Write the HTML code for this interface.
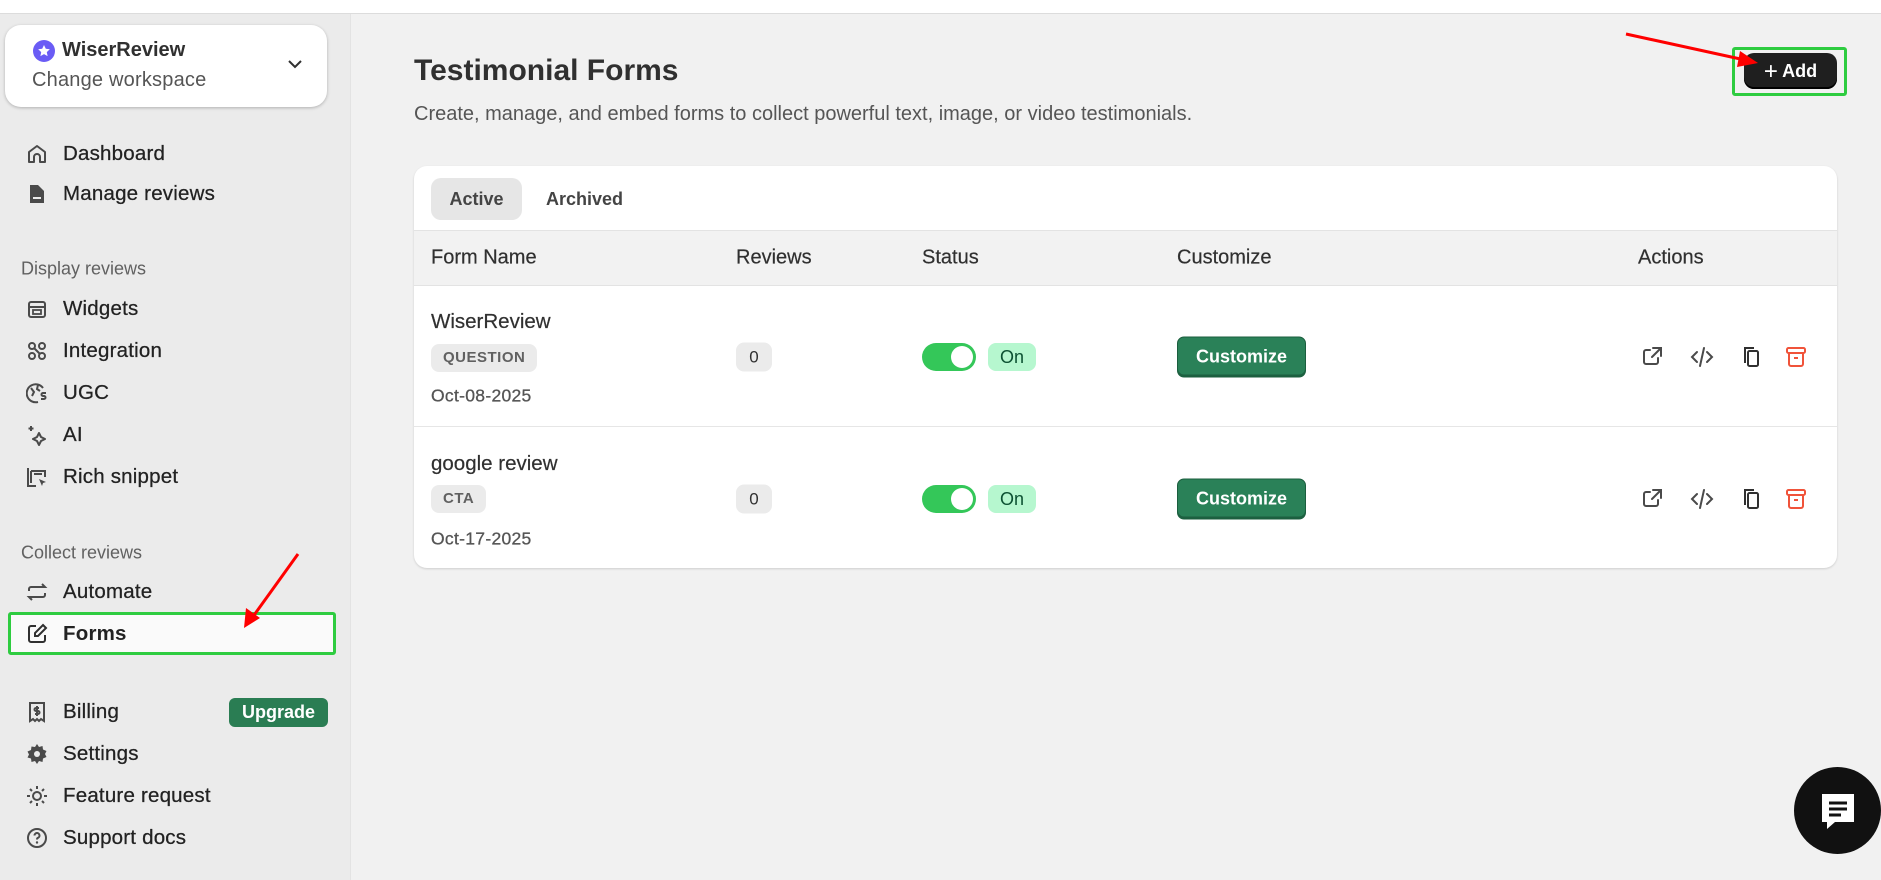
<!DOCTYPE html>
<html><head><meta charset="utf-8">
<style>
*{box-sizing:border-box;margin:0;padding:0}
body{width:1881px;height:880px;overflow:hidden;background:#f1f1f1;font-family:"Liberation Sans",sans-serif;color:#303030;position:relative}
.top{position:absolute;left:0;top:0;width:1881px;height:14px;background:#fff;border-bottom:1px solid #dcdcdc}
.side{position:absolute;left:0;top:14px;width:351px;height:866px;background:#ebebeb;border-right:1px solid #e3e3e3}
.ws{position:absolute;left:5px;top:25px;width:322px;height:82px;background:#fff;border-radius:16px;box-shadow:0 1px 3px rgba(0,0,0,.25)}
.ws .n{position:absolute;left:57px;top:14px;font-size:20px;font-weight:bold;color:#303030}
.ws .c{position:absolute;left:27px;top:44px;font-size:20px;color:#555;letter-spacing:.2px}
.ws .logo{position:absolute;left:28px;top:15px;width:22px;height:22px;border-radius:50%;background:#6a5cf5}
.nav{position:absolute;left:63px;font-size:20.5px;color:#222;transform:translateY(-50%);letter-spacing:.2px;-webkit-text-stroke:.25px #222}
.lbl{position:absolute;left:21px;font-size:18px;color:#616161;transform:translateY(-50%)}
.ic{position:absolute;left:26px;width:22px;height:22px;transform:translateY(-50%)}
.main-t{position:absolute;left:414px;top:54px;font-size:30px;font-weight:bold;color:#303030}
.sub{position:absolute;left:414px;top:103px;font-size:20px;color:#555}
.add{position:absolute;left:1744px;top:53px;width:93px;height:36px;background:#1f1f1f;border-radius:10px;color:#fff;font-weight:bold;font-size:18px;line-height:36px;text-align:center;box-shadow:inset 0 -2px 0 #000}
.gbox{position:absolute;border:3px solid #2ecc40;border-radius:3px}
.card{position:absolute;left:414px;top:166px;width:1423px;height:402px;background:#fff;border-radius:13px;box-shadow:0 1px 2px rgba(0,0,0,.15);overflow:hidden}
.tab{position:absolute;top:12px;height:42px;line-height:42px;font-size:18px;font-weight:bold;color:#444;padding:0 18px;border-radius:10px}
.hdr{position:absolute;left:0;top:64px;width:100%;height:56px;background:#f2f2f2;border-top:1px solid #e3e3e3;border-bottom:1px solid #e3e3e3}
.h{position:absolute;top:50%;transform:translateY(-50%);font-size:20px;color:#303030;-webkit-text-stroke:.2px #303030}
.row{position:absolute;left:0;width:100%;height:141px;border-bottom:1px solid #e6e6e6}
.t{position:absolute;transform:translateY(-50%)}
.name{left:17px;font-size:20.5px;color:#303030;-webkit-text-stroke:.2px #303030}
.badge{left:17px;height:28px;line-height:28px;padding:0 12px;background:#ebebeb;border-radius:8px;font-size:15px;font-weight:bold;color:#616161;letter-spacing:.5px}
.date{left:17px;font-size:17.5px;color:#555;letter-spacing:.3px;-webkit-text-stroke:.3px #555}
.cnt{left:322px;width:36px;height:29px;line-height:29px;text-align:center;background:#ebebeb;border-radius:8px;font-size:17px}
.tog{left:508px;width:54px;height:28px;background:#34c759;border-radius:14px}
.tog::after{content:"";position:absolute;right:3px;top:3px;width:22px;height:22px;border-radius:50%;background:#fff}
.on{left:574px;width:48px;height:28px;line-height:28px;text-align:center;background:#b6f7cf;border-radius:8px;font-size:18px;color:#0c5132}
.cus{left:763px;width:129px;height:41px;line-height:39px;text-align:center;background:#2a8158;border:1px solid #1b5e3e;border-radius:7px;color:#fff;font-weight:bold;font-size:18px;box-shadow:inset 0 -2px 0 #1c6040}
.chat{position:absolute;left:1794px;top:767px;width:87px;height:87px;border-radius:50%;background:#111}
</style></head><body>
<div class="top"></div>
<div class="side"></div>
<div class="ws"><div class="logo"><svg width="22" height="22" viewBox="0 0 22 22"><path d="M11 5l1.8 3.8 4 .5-3 2.8.8 4-3.6-2-3.6 2 .8-4-3-2.8 4-.5z" fill="#fff"/></svg></div><div class="n">WiserReview</div><div class="c">Change workspace</div>
<svg style="position:absolute;left:282px;top:34px" width="16" height="10" viewBox="0 0 16 10"><path d="M2 2l6 6 6-6" stroke="#303030" stroke-width="2" fill="none"/></svg></div>

<svg class="ic" style="top:154px" viewBox="0 0 22 22"><path d="M3 19V9l8-6 8 6v10h-5v-5a3 3 0 0 0-6 0v5z" stroke="#4a4a4a" stroke-width="2" fill="none" stroke-linejoin="round"/></svg>
<div class="nav" style="top:154px">Dashboard</div>
<svg class="ic" style="top:194px" viewBox="0 0 22 22"><path d="M4 2h8l6 6v12H4z" fill="#4a4a4a"/><rect x="7" y="14" width="8" height="2" fill="#ebebeb"/></svg>
<div class="nav" style="top:194px">Manage reviews</div>
<div class="lbl" style="top:269px">Display reviews</div>
<svg class="ic" style="top:309px" viewBox="0 0 22 22"><rect x="3" y="4" width="16" height="15" rx="2" stroke="#4a4a4a" stroke-width="2" fill="none"/><path d="M3 9h16" stroke="#4a4a4a" stroke-width="2"/><rect x="7" y="12" width="8" height="4" stroke="#4a4a4a" stroke-width="1.8" fill="none"/></svg>
<div class="nav" style="top:309px">Widgets</div>
<svg class="ic" style="top:351px" viewBox="0 0 22 22"><g stroke="#4a4a4a" stroke-width="2" fill="none"><circle cx="6" cy="6" r="3"/><circle cx="16" cy="6" r="3"/><circle cx="6" cy="16" r="3"/><circle cx="16" cy="16" r="3"/><path d="M8 8l6 6"/></g></svg>
<div class="nav" style="top:351px">Integration</div>
<svg class="ic" style="top:393px" viewBox="0 0 22 22"><g stroke="#4a4a4a" stroke-width="2" fill="none"><path d="M17 6A9 9 0 1 0 12 20"/><path d="M5 6l3 4-2 4M12 3l-1 4 3 2"/><path d="M20 11h-3a1.5 1.5 0 0 0 0 3h1a1.5 1.5 0 0 1 0 3h-3"/></g></svg>
<div class="nav" style="top:393px">UGC</div>
<svg class="ic" style="top:435px" viewBox="0 0 22 22"><path d="M13 9l2 4 4 2-4 2-2 4-2-4-4-2 4-2z" stroke="#4a4a4a" stroke-width="2" fill="none" stroke-linejoin="round"/><path d="M5 2v5M2.5 4.5h5" stroke="#4a4a4a" stroke-width="2"/></svg>
<div class="nav" style="top:435px">AI</div>
<svg class="ic" style="top:477px" viewBox="0 0 22 22"><path d="M2 2v18h8M5 5h14v6M5 5v12M8 8h8" stroke="#4a4a4a" stroke-width="2" fill="none"/><path d="M13 13l7 3-3 1-1 3z" fill="#4a4a4a"/></svg>
<div class="nav" style="top:477px">Rich snippet</div>
<div class="lbl" style="top:553px">Collect reviews</div>
<svg class="ic" style="top:592px" viewBox="0 0 22 22"><g stroke="#4a4a4a" stroke-width="2" fill="none"><path d="M3 10V8a2 2 0 0 1 2-2h14l-3-3M19 12v2a2 2 0 0 1-2 2H3l3 3"/></g></svg>
<div class="nav" style="top:592px">Automate</div>
<div style="position:absolute;left:8px;top:612px;width:328px;height:43px;background:#fafafa;border:3px solid #2ecc40;border-radius:3px"></div>
<svg class="ic" style="top:634px" viewBox="0 0 22 22"><g stroke="#303030" stroke-width="2" fill="none"><path d="M10 3H5a2 2 0 0 0-2 2v12a2 2 0 0 0 2 2h12a2 2 0 0 0 2-2v-5"/><path d="M17 2l3 3-8 8H9v-3z"/></g></svg>
<div class="nav" style="top:634px;font-weight:bold;-webkit-text-stroke:0">Forms</div>
<svg class="ic" style="top:712px" viewBox="0 0 22 22"><g stroke="#4a4a4a" stroke-width="2" fill="none"><path d="M4 2h14v18l-3-2-2 2-2-2-2 2-2-2-3 2z"/><path d="M13 7h-3a1.5 1.5 0 0 0 0 3h2a1.5 1.5 0 0 1 0 3H9M11 5v10"/></g></svg>
<div class="nav" style="top:712px">Billing</div>
<div style="position:absolute;left:229px;top:698px;width:99px;height:29px;background:#2a7d53;border-radius:6px;color:#fff;font-weight:bold;font-size:18px;line-height:29px;text-align:center">Upgrade</div>
<svg class="ic" style="top:754px" viewBox="0 0 22 22"><path d="M11 1l2 3 3.5-1 .5 3.5 3.5 1.5-1.5 3 1.5 3-3.5 1.5-.5 3.5-3.5-1-2 3-2-3-3.5 1-.5-3.5L1.5 14.5l1.5-3-1.5-3L5 7l.5-3.5L9 4z" fill="#4a4a4a"/><circle cx="11" cy="11" r="3" fill="#ebebeb"/></svg>
<div class="nav" style="top:754px">Settings</div>
<svg class="ic" style="top:796px" viewBox="0 0 22 22"><g stroke="#4a4a4a" stroke-width="2" fill="none"><circle cx="11" cy="11" r="4"/><path d="M11 1v3M11 18v3M1 11h3M18 11h3M4 4l2 2M16 16l2 2M4 18l2-2M16 6l2-2"/></g></svg>
<div class="nav" style="top:796px">Feature request</div>
<svg class="ic" style="top:838px" viewBox="0 0 22 22"><g stroke="#4a4a4a" stroke-width="2" fill="none"><circle cx="11" cy="11" r="9"/><path d="M8.5 8.5a2.5 2.5 0 1 1 3.5 2.3c-.7.3-1 .8-1 1.7"/></g><circle cx="11" cy="15.5" r="1.2" fill="#4a4a4a"/></svg>
<div class="nav" style="top:838px">Support docs</div>

<div class="main-t">Testimonial Forms</div>
<div class="sub">Create, manage, and embed forms to collect powerful text, image, or video testimonials.</div>
<div class="gbox" style="left:1732px;top:47px;width:115px;height:49px"></div>
<div class="add"><span style="font-size:24px;font-weight:normal;vertical-align:-2px">+</span> Add</div>

<div class="card">
<div class="tab" style="left:17px;background:#e6e6e6;width:91px;padding:0;text-align:center">Active</div>
<div class="tab" style="left:114px;font-weight:bold;color:#444">Archived</div>
<div class="hdr">
<div class="h" style="left:17px">Form Name</div><div class="h" style="left:322px">Reviews</div><div class="h" style="left:508px">Status</div><div class="h" style="left:763px">Customize</div><div class="h" style="left:1224px">Actions</div>
</div>
<div class="row" style="top:120px">
<div class="t name" style="top:36px">WiserReview</div>
<div class="t badge" style="top:72px">QUESTION</div>
<div class="t date" style="top:110px">Oct-08-2025</div>
<div class="t cnt" style="top:71px">0</div>
<div class="t tog" style="top:71px"></div>
<div class="t on" style="top:71px">On</div>
<div class="t cus" style="top:71px">Customize</div>
</div>
<div class="row" style="top:261px;border:none">
<div class="t name" style="top:37px">google review</div>
<div class="t badge" style="top:72px">CTA</div>
<div class="t date" style="top:112px">Oct-17-2025</div>
<div class="t cnt" style="top:72px">0</div>
<div class="t tog" style="top:72px"></div>
<div class="t on" style="top:72px">On</div>
<div class="t cus" style="top:72px">Customize</div>
</div>
</div>

<svg style="position:absolute;left:0;top:0" width="1881" height="880">
<defs>
<g id="ext" stroke="#4a4a4a" stroke-width="2" fill="none" stroke-linecap="round"><path d="M-2-7h-4a2 2 0 0 0-2 2v10a2 2 0 0 0 2 2h10a2 2 0 0 0 2-2v-4"/><path d="M1-9h8v8M9-9L0 0"/></g>
<g id="code" stroke="#4a4a4a" stroke-width="2" fill="none" stroke-linecap="round"><path d="M-5-5l-5 5 5 5M5-5l5 5-5 5M2-9l-4 18"/></g>
<g id="copy" stroke="#303030" stroke-width="2" fill="none"><path d="M-6 6V-9h9"/><rect x="-3" y="-6" width="10" height="15" rx="1.5"/></g>
<g id="arc" stroke="#f0533a" stroke-width="2" fill="none"><rect x="-9" y="-9" width="18" height="5" rx="1.5"/><path d="M-7-4v11a2 2 0 0 0 2 2h10a2 2 0 0 0 2-2V-4M-2 1h4"/></g>
</defs>
<use href="#ext" x="1652" y="357"/><use href="#code" x="1702" y="357"/><use href="#copy" x="1751" y="357"/><use href="#arc" x="1796" y="357"/>
<use href="#ext" x="1652" y="499"/><use href="#code" x="1702" y="499"/><use href="#copy" x="1751" y="499"/><use href="#arc" x="1796" y="499"/>
<g stroke="#f00" stroke-width="3" fill="#f00">
<line x1="298" y1="554" x2="252" y2="618"/><polygon points="244,628 246,608 260,618" stroke="none"/>
<line x1="1626" y1="34" x2="1745" y2="60"/><polygon points="1758,63 1740,51 1737,67" stroke="none"/>
</g>
</svg>

<div class="chat"><svg style="position:absolute;left:25px;top:24px" width="38" height="40" viewBox="0 0 38 40"><path d="M3 3h32v28H16l-8 7v-7H3z" fill="#fff"/><path d="M10 12h18M10 18h18M10 24h12" stroke="#111" stroke-width="3"/></svg></div>
</body></html>
